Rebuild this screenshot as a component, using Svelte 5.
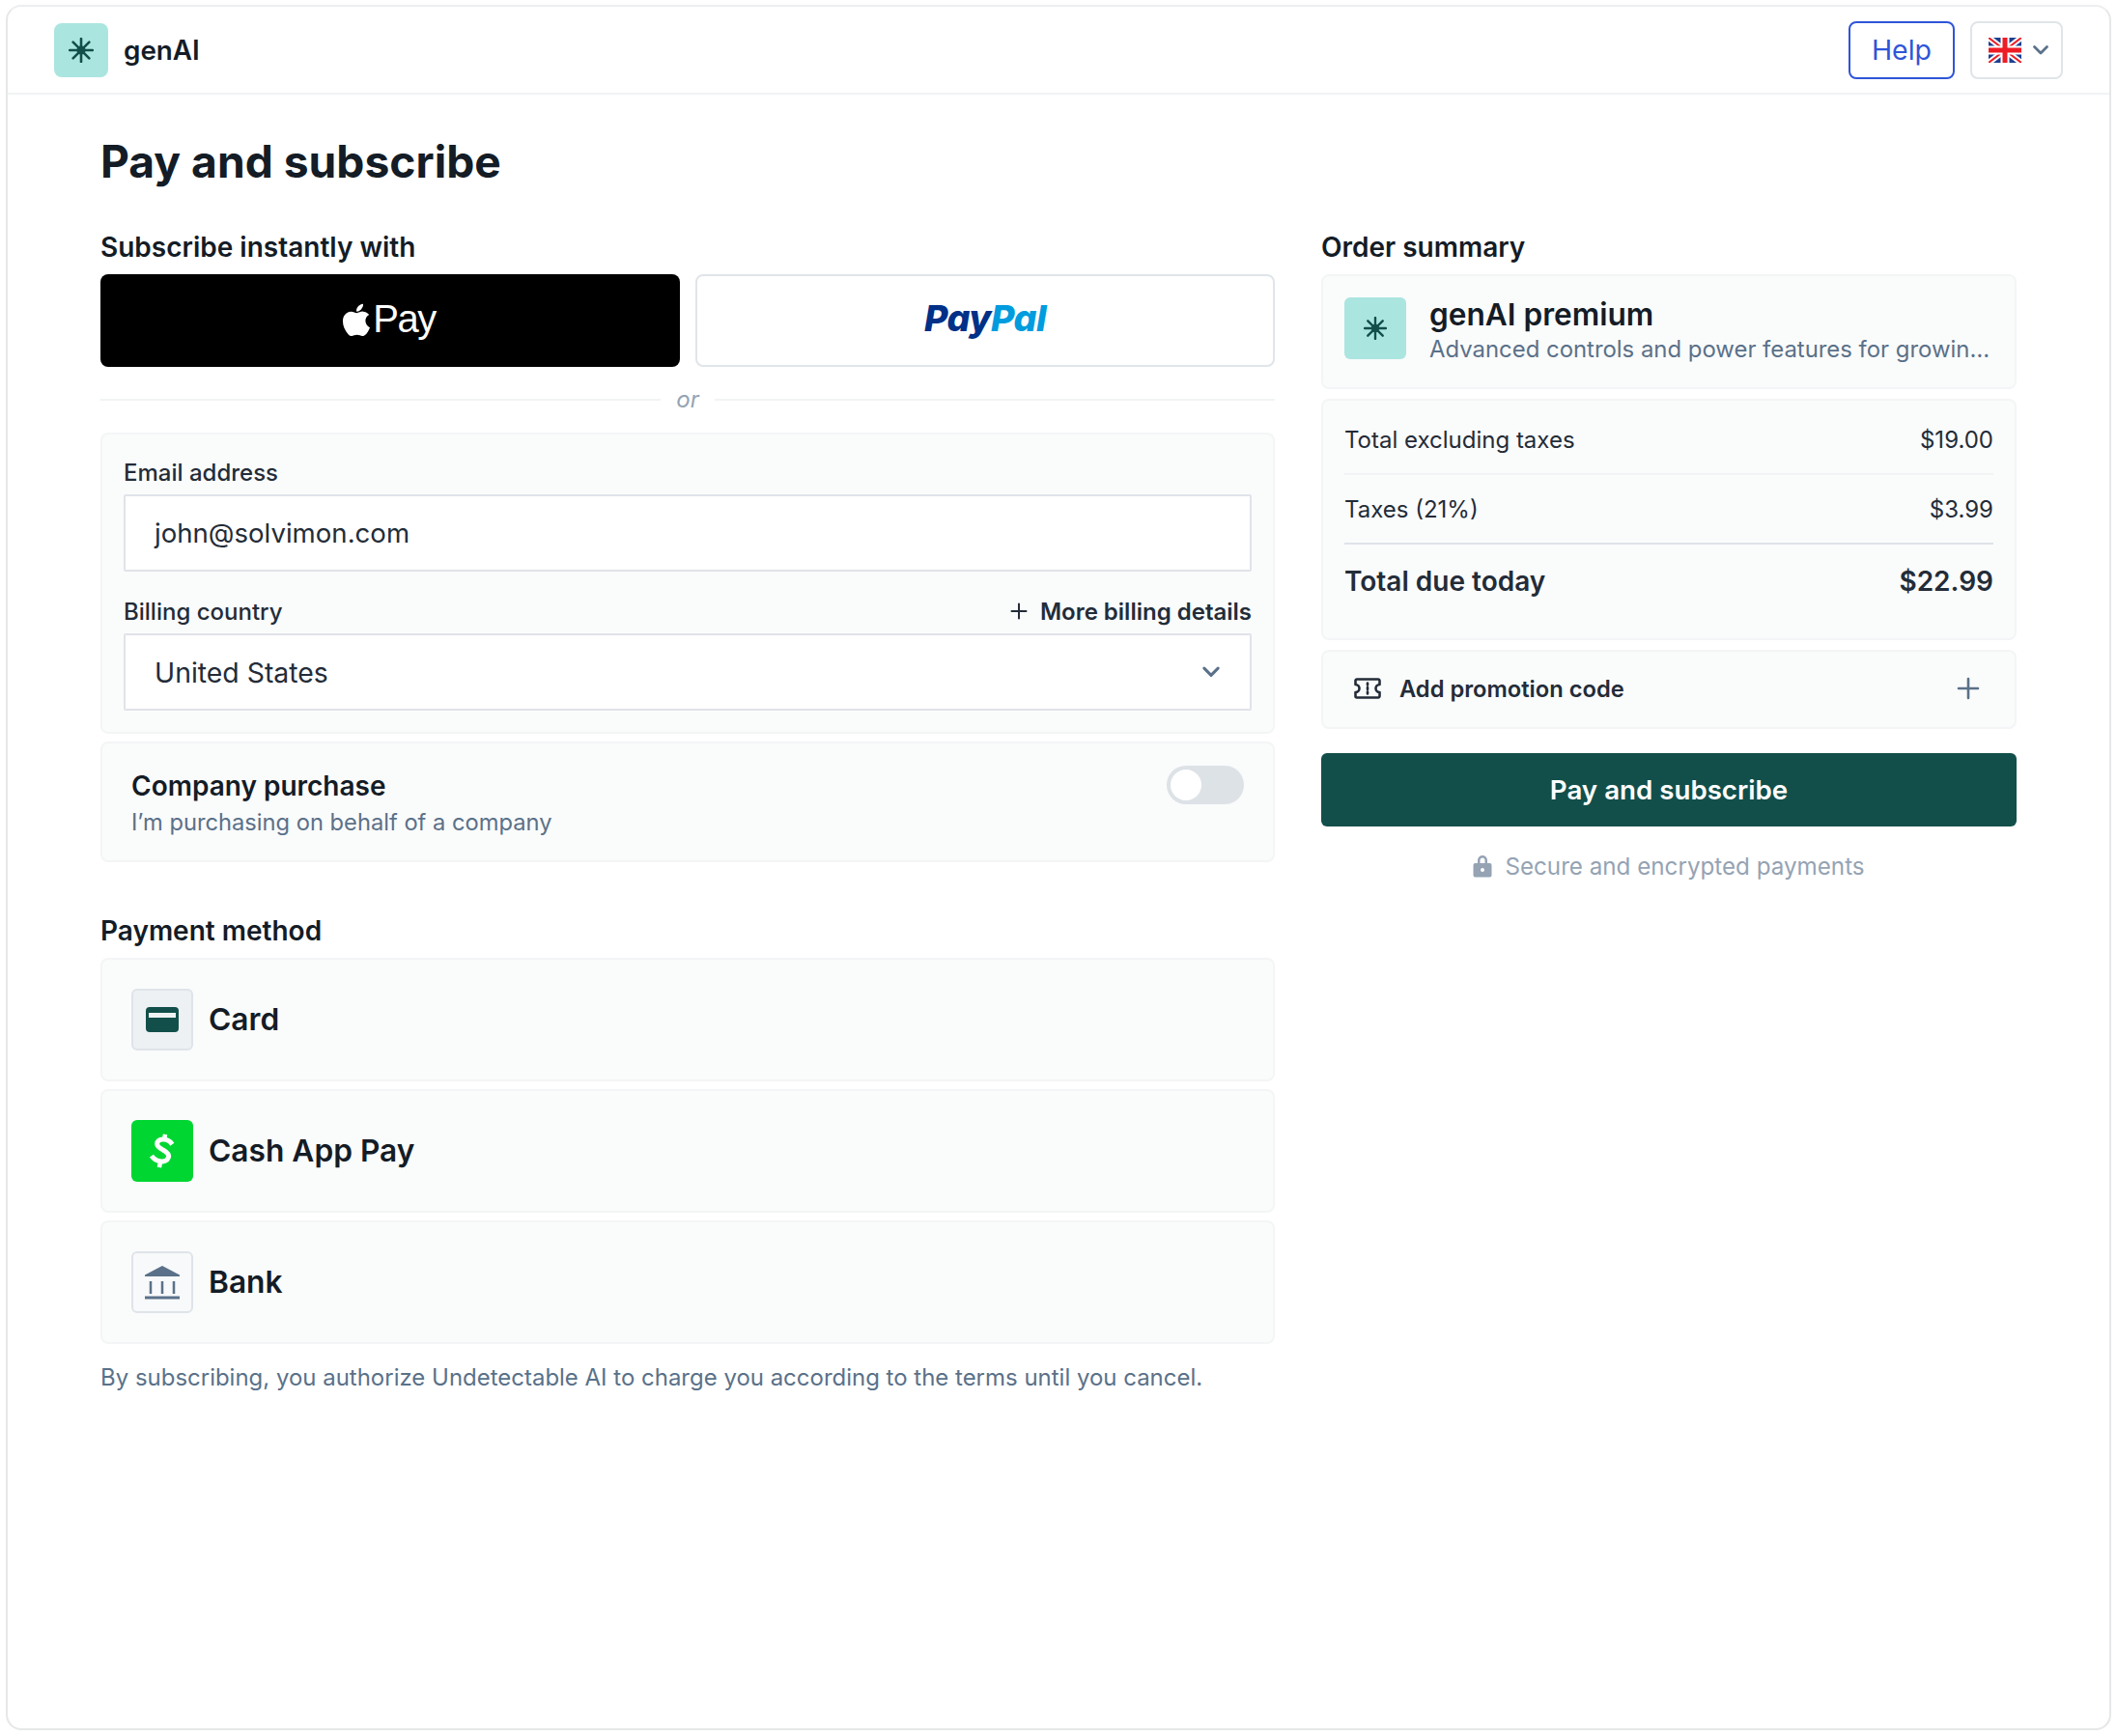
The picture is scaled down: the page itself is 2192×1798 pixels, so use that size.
<script>
  const rows = [
    { label: 'Total excluding taxes', value: '$19.00' },
    { label: 'Taxes (21%)', value: '$3.99' }
  ];
</script>

{#snippet star(size)}
  <svg width={size} height={size} viewBox="0 0 24 24" fill="none" stroke="#124f4b" stroke-width="2.4" stroke-linecap="round">
    <path d="M12 1v22M1 12h22M4.300 4.300l15.400 15.400M19.700 4.300L4.300 19.700" />
    <circle cx="12" cy="12" r="4.200" fill="#124f4b" stroke="none" />
  </svg>
{/snippet}

{#snippet chevron(w, color)}
  <svg width={w} height={w} viewBox="0 0 20 20" fill="none" stroke={color} stroke-width="2.800" stroke-linecap="round" stroke-linejoin="round">
    <path d="M3.500 6.500L10 13l6.500-6.500" />
  </svg>
{/snippet}

<div class="frame">
  <header class="topbar">
    <div class="brand">
      <span class="logo">{@render star(26)}</span>
      <span class="brand-name">genAI</span>
    </div>
    <div class="top-actions">
      <button class="help">Help</button>
      <button class="lang">
        <svg class="flag" width="34" height="26" viewBox="0 0 34 26">
          <rect width="34" height="26" rx="3" fill="#1f3f8f" />
          <path d="M0 0L34 26M34 0L0 26" stroke="#fff" stroke-width="6" />
          <path d="M0 0L34 26M34 0L0 26" stroke="#ee1c25" stroke-width="2" />
          <path d="M17 0v26M0 13h34" stroke="#fff" stroke-width="9" />
          <path d="M17 0v26M0 13h34" stroke="#ee1c25" stroke-width="5" />
        </svg>
        {@render chevron(20, '#5a7189')}
      </button>
    </div>
  </header>

  <main class="main">
    <h1>Pay and subscribe</h1>
    <div class="columns">
      <section class="left">
        <h2>Subscribe instantly with</h2>
        <div class="wallets">
          <button class="wallet apple">
            <svg width="34" height="34" viewBox="3 2.6 18 18.4" fill="#fff">
              <path d="M17.05 20.28c-.98.95-2.05.8-3.08.35-1.09-.46-2.09-.48-3.24 0-1.44.62-2.2.44-3.06-.35C2.79 15.25 3.51 7.59 9.05 7.31c1.35.07 2.29.74 3.08.8 1.18-.24 2.31-.93 3.57-.84 1.51.12 2.65.72 3.4 1.8-3.12 1.87-2.38 5.98.48 7.13-.57 1.5-1.31 2.99-2.54 4.09zM12.03 7.25c-.15-2.23 1.66-4.07 3.74-4.25.29 2.58-2.34 4.5-3.74 4.25z" />
            </svg>
            <span>Pay</span>
          </button>
          <button class="wallet paypal"><span class="pp1">Pay</span><span class="pp2">Pal</span></button>
        </div>
        <div class="or"><i></i><em>or</em><i></i></div>

        <div class="card form">
          <div class="label-row first"><span>Email address</span></div>
          <div class="input email">john@solvimon.com</div>
          <div class="label-row second">
            <span>Billing country</span>
            <span class="more">
              <svg width="20" height="20" viewBox="0 0 20 20" fill="none" stroke="#232c38" stroke-width="2" stroke-linecap="round"><path d="M10 2.500v15M2.500 10h15" /></svg>
              More billing details
            </span>
          </div>
          <div class="input select">
            <span>United States</span>
            {@render chevron(22, '#5a7189')}
          </div>
        </div>

        <div class="card company">
          <div>
            <div class="company-title">Company purchase</div>
            <div class="company-sub">I’m purchasing on behalf of a company</div>
          </div>
          <span class="toggle"><span class="knob"></span></span>
        </div>

        <h2 class="pm-title">Payment method</h2>
        <div class="methods">
          <div class="card method">
            <span class="micon grey">
              <svg width="34" height="28" viewBox="0 0 34 28">
                <rect width="34" height="26" y="1" rx="4" fill="#124f4b" />
                <rect x="3" y="7" width="28" height="5" fill="#eef2f3" />
              </svg>
            </span>
            <span>Card</span>
          </div>
          <div class="card method">
            <span class="micon cash">
              <svg width="28" height="38" viewBox="0 0 28 38" fill="none" stroke="#fff" stroke-width="5">
                <g transform="rotate(10 14 19)">
                  <path d="M23 10.500C20 7.500 16.500 6.500 13 7c-4 .6-6 3-5.500 5.800.5 3 4 4 7.500 5.200 4 1.400 7 3 6.500 6.500-.5 3.500-4 5.500-8 5.500-3.500 0-7-1.500-9.500-4" />
                  <path d="M14 1.500V7M14 30.500V36.500" stroke-width="4.500" />
                </g>
              </svg>
            </span>
            <span>Cash App Pay</span>
          </div>
          <div class="card method">
            <span class="micon bank">
              <svg width="36" height="36" viewBox="0 0 36 36" fill="none">
                <path d="M0 10.500L18 1l18 9.500V12H0z" fill="#5a7189" />
                <path d="M6 17v13M18 17v13M30 17v13" stroke="#5a7189" stroke-width="2.500" />
                <path d="M0 34h36" stroke="#5a7189" stroke-width="3" />
              </svg>
            </span>
            <span>Bank</span>
          </div>
        </div>
        <p class="terms">By subscribing, you authorize Undetectable AI to charge you according to the terms until you cancel.</p>
      </section>

      <aside class="right">
        <h2>Order summary</h2>
        <div class="card product">
          <span class="plogo">{@render star(24)}</span>
          <div class="ptext">
            <div class="ptitle">genAI premium</div>
            <div class="psub">Advanced controls and power features for growin…</div>
          </div>
        </div>
        <div class="card totals">
          {#each rows as r, i}
            <div class="trow" class:last={i === rows.length - 1}><span>{r.label}</span><span>{r.value}</span></div>
          {/each}
          <div class="trow total"><span>Total due today</span><span>$22.99</span></div>
        </div>
        <div class="card promo">
          <svg width="28" height="22" viewBox="0 0 28 22" fill="none" stroke="#232c38" stroke-width="2.600" stroke-linejoin="round">
            <path d="M3 1.500h22a1.500 1.500 0 0 1 1.500 1.500v4a4 4 0 0 0 0 8v4a1.500 1.500 0 0 1-1.500 1.500H3A1.500 1.500 0 0 1 1.500 19v-4a4 4 0 0 0 0-8V3A1.500 1.500 0 0 1 3 1.500z" />
            <path d="M14 5.500v2M14 10v2M14 14.500v2" stroke-linecap="round" />
          </svg>
          <span>Add promotion code</span>
          <svg class="promo-plus" width="24" height="24" viewBox="0 0 24 24" fill="none" stroke="#5a7189" stroke-width="2.600" stroke-linecap="round"><path d="M12 2v20M2 12h20" /></svg>
        </div>
        <button class="pay">Pay and subscribe</button>
        <div class="secure">
          <svg width="20" height="24" viewBox="0 0 20 24" fill="#95a3b3">
            <path fill-rule="evenodd" d="M5 9V6a5 5 0 0 1 10 0v3h2.500A2 2 0 0 1 19.500 11v10.500a2 2 0 0 1-2 2h-15a2 2 0 0 1-2-2V11a2 2 0 0 1 2-2zm2.500 0h5V6a2.500 2.500 0 0 0-5 0zM10 14a2 2 0 1 0 0 4 2 2 0 0 0 0-4z" />
          </svg>
          <span>Secure and encrypted payments</span>
        </div>
      </aside>
    </div>
  </main>
</div>

<style>
  :global(body) { margin: 0; background: #fff; }
  * { box-sizing: border-box; }
  .frame {
    width: 2180px;
    height: 1787px;
    margin: 5px 0 0 6px;
    border: 2px solid #e6e7e8;
    border-top-color: #eceeef;
    border-radius: 16px;
    background: #fff;
    font-family: Inter, "Noto Sans", sans-serif;
    color: #141c26;
  }
  button { font-family: inherit; cursor: pointer; }

  .topbar {
    height: 91px;
    padding: 0 48px;
    border-bottom: 2px solid #f1f3f4;
    display: flex;
    align-items: center;
    justify-content: space-between;
  }
  .brand { display: flex; align-items: center; gap: 16px; }
  .logo {
    width: 56px; height: 56px;
    border-radius: 8px;
    background: #abe5e0;
    display: flex; align-items: center; justify-content: center;
  }
  .brand-name { font-size: 27.800px; font-weight: 600; }
  .top-actions { display: flex; gap: 16px; }
  .help {
    width: 110px; height: 60px;
    border: 2px solid #2f55d8;
    border-radius: 8px;
    background: #fff;
    color: #2f55d8;
    font-size: 28.500px;
  }
  .lang {
    width: 96px; height: 60px;
    border: 2px solid #e0e5e9;
    border-radius: 8px;
    background: #fff;
    padding: 0 0 0 5px;
    display: flex; align-items: center; justify-content: center; gap: 10px;
  }
  .flag { display: block; }

  .main { padding: 0 96px; }
  h1 {
    margin: 0;
    padding-top: 41px;
    font-size: 46.200px;
    line-height: 56px;
    font-weight: 700;
  }
  .columns {
    margin-top: 43px;
    display: grid;
    grid-template-columns: 1216px 720px;
    gap: 48px;
    align-items: start;
  }
  h2 {
    margin: 0 0 10px;
    font-size: 28px;
    line-height: 36px;
    font-weight: 600;
  }
  .wallets { display: grid; grid-template-columns: 600px 600px; gap: 16px; }
  .wallet {
    height: 96px;
    border-radius: 8px;
    display: flex; align-items: center; justify-content: center;
  }
  .apple {
    background: #000; border: none; color: #fff;
    padding: 0 5px 3px 0;
    font-family: "Liberation Sans", sans-serif;
    font-size: 40px;
    letter-spacing: -1.500px;
  }
  .paypal {
    background: #fff; border: 2px solid #e0e5e9;
    padding: 0 0 5px;
    font-size: 37.500px;
    font-weight: 800;
    font-style: italic;
    letter-spacing: -0.500px;
  }
  .pp1 { color: #003087; }
  .pp2 { color: #009cde; }
  .or {
    margin: 20px 0;
    height: 28px;
    display: flex; align-items: center; gap: 16px;
    color: #95a3b3;
    font-size: 24px;
  }
  .or i { flex: 1; height: 2px; background: #f1f3f4; }
  .or em { font-style: italic; margin-top: -2px; }

  .card {
    border: 2px solid #f3f5f6;
    border-radius: 8px;
    background: #fafbfb;
  }
  .form { height: 312px; padding: 23px 22px; }
  .label-row {
    height: 32px;
    margin-bottom: 6px;
    display: flex; align-items: center; justify-content: space-between;
    font-size: 24px;
    font-weight: 500;
    color: #232c38;
  }
  .label-row.first { margin-bottom: 7px; }
  .label-row.second { margin-top: 25px; margin-bottom: 7px; }
  .more { display: flex; align-items: center; gap: 12px; font-weight: 600; }
  .input {
    height: 80px;
    padding: 0 30px;
    border: 2px solid #e0e3e8;
    border-radius: 2px;
    background: #fff;
    display: flex; align-items: center;
    font-size: 28.400px;
    color: #232c38;
  }
  .email { font-size: 27.600px; }
  .select { justify-content: space-between; padding-right: 29px; }

  .company {
    margin-top: 8px;
    height: 125px;
    padding: 24px 30px;
    display: flex; justify-content: space-between; align-items: flex-start;
  }
  .company-title { font-size: 28px; line-height: 40px; font-weight: 600; }
  .company-sub { font-size: 23.700px; line-height: 36px; color: #5a7189; }
  .toggle {
    width: 80px; height: 40px;
    margin-top: -1px;
    border-radius: 20px;
    background: #dde2e7;
    display: flex; align-items: center; padding-left: 4px;
  }
  .knob { width: 32px; height: 32px; border-radius: 50%; background: #fff; }

  .pm-title { margin-top: 53px; }
  .methods { display: flex; flex-direction: column; gap: 8.500px; }
  .method {
    height: 127.500px;
    padding: 0 30px;
    display: flex; align-items: center; gap: 16px;
    font-size: 31.700px;
    font-weight: 600;
  }
  .micon {
    width: 64px; height: 64px;
    border-radius: 6px;
    display: flex; align-items: center; justify-content: center;
    flex: none;
  }
  .grey { background: #eef1f4; border: 2px solid #dfe4e9; }
  .cash { background: #00d632; }
  .bank { background: #f7f9fa; border: 2px solid #dfe4e9; }
  .terms {
    margin: 18px 0 0;
    font-size: 23.970px;
    line-height: 34px;
    color: #5a7189;
  }

  .product {
    height: 119px;
    padding: 22px;
    display: flex; gap: 24px;
  }
  .plogo {
    width: 64px; height: 64px;
    border-radius: 6px;
    background: #abe5e0;
    display: flex; align-items: center; justify-content: center;
    flex: none;
  }
  .ptext { min-width: 0; flex: 1; margin-top: -2px; }
  .ptitle { font-size: 31.600px; line-height: 40px; font-weight: 600; }
  .psub {
    font-size: 23.900px; line-height: 32px;
    color: #5a7189;
    white-space: nowrap;
  }
  .totals { margin-top: 10px; height: 250px; padding: 5px 22px 0; }
  .trow {
    height: 72px;
    display: flex; align-items: center; justify-content: space-between;
    font-size: 24px;
    color: #232c38;
    border-bottom: 2px solid #f1f3f4;
  }
  .trow.last { border-bottom-color: #dfe3e8; }
  .trow.total { border: none; height: 76px; font-size: 28px; font-weight: 600; }
  .promo {
    margin-top: 10px;
    height: 82px;
    padding: 0 36px 2px 32px;
    display: flex; align-items: center; gap: 19px;
    font-size: 23.700px;
    font-weight: 600;
    color: #232c38;
  }
  .promo-plus { margin-left: auto; }
  .pay {
    width: 100%;
    height: 76px;
    margin-top: 25px;
    border: none;
    border-radius: 6px;
    background: #124f4b;
    color: #fff;
    font-size: 27.700px;
    font-weight: 600;
  }
  .secure {
    margin-top: 24px;
    height: 34px;
    display: flex; align-items: center; justify-content: center; gap: 13px;
    font-size: 24.200px;
    color: #95a3b3;
  }
</style>
